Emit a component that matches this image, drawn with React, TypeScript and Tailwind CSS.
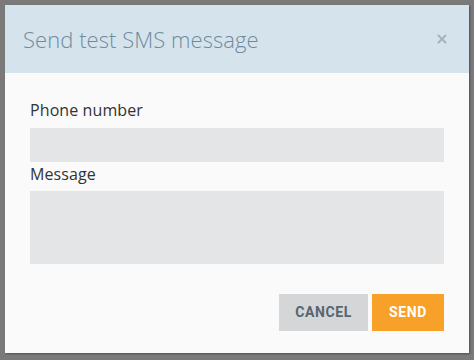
import { X } from 'lucide-react';

export default function App() {
  return (
    <div className="flex h-[360px] w-[474px] bg-[#7a7a7a] p-[5px] pb-[7px] font-['Open_Sans',sans-serif]">
      <div className="flex flex-1 flex-col bg-[#fafafa] shadow-[1px_1px_2px_rgba(0,0,0,0.35)]">
        {/* Header */}
        <div className="flex h-[68px] items-center justify-between bg-[#d5e3ec] pl-[18px] pr-[20px]">
          <h2 className="text-[22px] font-light tracking-[0.05px] text-[#6f8c9e]">Send test SMS message</h2>
          <button type="button" className="text-[#a9b3ba]">
            <X className="h-[14px] w-[14px]" strokeWidth={3.5} />
          </button>
        </div>

        {/* Body */}
        <div className="flex flex-col px-[25px] pt-[26px]">
          <label className="text-[16px] leading-[22px] tracking-[0.1px] text-[#333]">Phone number</label>
          <input className="mt-[7px] h-[34px] w-full bg-[#e3e5e6] outline-none" />
          <label className="text-[16px] leading-[24px] tracking-[0.1px] text-[#333]">Message</label>
          <textarea className="mt-[5px] h-[73px] w-full resize-none bg-[#e3e5e6] outline-none" />
        </div>

        {/* Footer */}
        <div className="mt-[30px] flex justify-end gap-[4px] px-[25px]">
          <button
            type="button"
            className="h-[37px] w-[89px] bg-[#d4d6d8] font-['Roboto',sans-serif] text-[14px] font-bold tracking-[0.6px] text-[#566670]"
          >
            CANCEL
          </button>
          <button
            type="button"
            className="h-[37px] w-[72px] bg-[#f7a128] font-['Roboto',sans-serif] text-[14px] font-bold tracking-[0.6px] text-white"
          >
            SEND
          </button>
        </div>
      </div>
    </div>
  );
}
